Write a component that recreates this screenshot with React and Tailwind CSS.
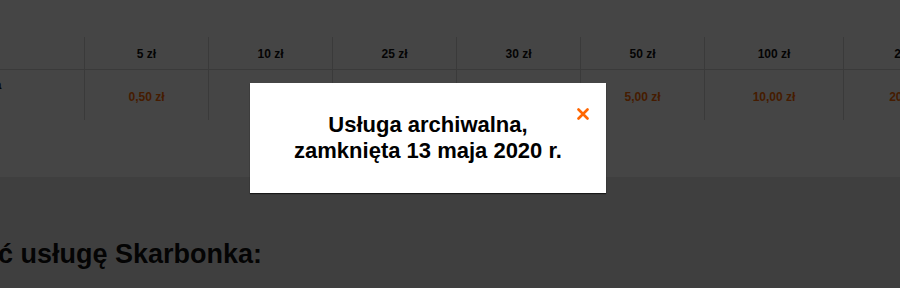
import React from 'react';

const columns = [
  { amount: '5 zł', fee: '0,50 zł', width: 'w-[124px]' },
  { amount: '10 zł', fee: '1,00 zł', width: 'w-[124px]' },
  { amount: '25 zł', fee: '2,50 zł', width: 'w-[124px]' },
  { amount: '30 zł', fee: '3,00 zł', width: 'w-[124px]' },
  { amount: '50 zł', fee: '5,00 zł', width: 'w-[124px]' },
  { amount: '100 zł', fee: '10,00 zł', width: 'w-[139px]' },
  { amount: '200 zł', fee: '20,00 zł', width: 'w-[134px]' },
];

function FeeTable() {
  return (
    <div className="-ml-[120px] pt-[37px] flex text-[12px] font-bold">
      <div className="w-[204px] shrink-0 flex flex-col">
        <div className="h-[33px] border-b border-[#d6d6d6]" />
        <div className="h-[50px] flex flex-col justify-center pl-[68px] pb-[4px] leading-[15px] text-[#111] whitespace-nowrap">
          <span>Opłata za</span>
          <span>wpłatę</span>
        </div>
      </div>
      {columns.map((c) => (
        <div key={c.amount} className={`${c.width} shrink-0 flex flex-col border-l border-[#d6d6d6]`}>
          <div className="h-[33px] border-b border-[#d6d6d6] flex items-center justify-center text-[#111] pt-[2px]">
            {c.amount}
          </div>
          <div className="h-[50px] flex items-center justify-center text-[#ff6a00] pt-[4px]">
            {c.fee}
          </div>
        </div>
      ))}
    </div>
  );
}

function ArchiveModal() {
  return (
    <div className="absolute left-[250px] top-[83px] w-[356px] h-[110px] bg-white shadow-[0_1px_1px_rgba(0,0,0,0.6)] flex items-center justify-center">
      <p className="text-center text-[22px] leading-[26px] font-bold text-black">
        Usługa archiwalna,
        <br />
        zamknięta 13 maja 2020 r.
      </p>
      <button className="absolute top-[25px] right-[17px] w-[12px] h-[12px] flex items-center justify-center">
        <svg width="12" height="12" viewBox="0 0 12 12">
          <path d="M1.5 1.5 L10.5 10.5 M10.5 1.5 L1.5 10.5" stroke="#ff6600" strokeWidth="2.6" strokeLinecap="round" />
        </svg>
      </button>
    </div>
  );
}

export default function App() {
  return (
    <div
      className="relative w-[900px] h-[288px] overflow-hidden bg-white"
      style={{ fontFamily: '"Liberation Sans", Arial, sans-serif' }}
    >
      <div className="h-[177px] bg-white">
        <FeeTable />
      </div>
      <div className="h-[111px] bg-[#eaeaea] pt-[61px]">
        <div className="w-[262px] flex justify-end">
          <h2 className="whitespace-nowrap text-[27px] leading-[32px] font-bold text-[#111]">
            Jak aktywować usługę Skarbonka:
          </h2>
        </div>
      </div>
      <div className="absolute inset-0 bg-black/[0.73]" />
      <ArchiveModal />
    </div>
  );
}
